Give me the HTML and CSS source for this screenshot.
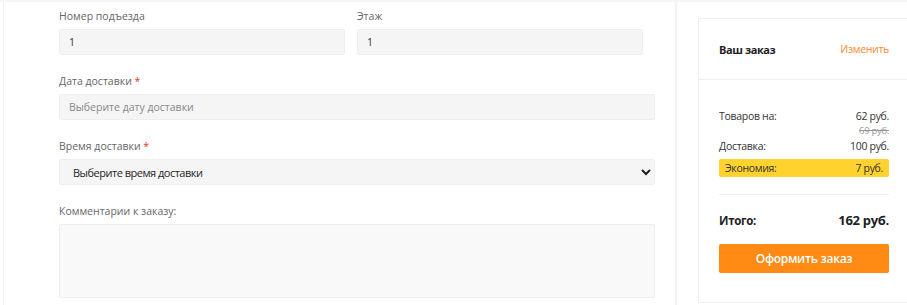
FILE: index.html
```html
<!DOCTYPE html>
<html lang="ru">

<head>
    <meta charset="UTF-8">
    <meta name="viewport" content="width=device-width, initial-scale=1.0">
    <link rel="stylesheet" href="styles.css">
</head>

<body>
    <div class="page">
        <div class="checkout-form">
            <div class="form-row">
                <div class="form-group">
                    <label for="entrance">Номер подъезда</label>
                    <input type="text" id="entrance" class="form-control" value="1">
                </div>
                <div class="form-group">
                    <label for="floor">Этаж</label>
                    <input type="text" id="floor" class="form-control" value="1">
                </div>
            </div>
            <div class="form-group">
                <label for="date">Дата доставки <span class="req">*</span></label>
                <input type="text" id="date" class="form-control" placeholder="Выберите дату доставки">
            </div>
            <div class="form-group">
                <label for="time">Время доставки <span class="req">*</span></label>
                <select id="time" class="form-control form-select">
                    <option value="">Выберите время доставки</option>
                </select>
            </div>
            <div class="form-group">
                <label for="comment">Комментарии к заказу:</label>
                <textarea id="comment" class="form-control form-textarea"></textarea>
            </div>
        </div>

        <div class="order-card">
            <div class="order-head">
                <span class="order-title">Ваш заказ</span>
                <a href="#" class="order-edit">Изменить</a>
            </div>
            <div class="order-body">
                <div class="order-line">
                    <span>Товаров на:</span>
                    <span>62 руб.</span>
                </div>
                <div class="order-old">69 руб.</div>
                <div class="order-line">
                    <span>Доставка:</span>
                    <span>100 руб.</span>
                </div>
                <div class="order-line order-save">
                    <span>Экономия:</span>
                    <span>7 руб.</span>
                </div>
                <div class="order-total">
                    <span>Итого:</span>
                    <span class="total-sum">162 руб.</span>
                </div>
                <button type="button" class="btn-order">Оформить заказ</button>
            </div>
        </div>
    </div>
</body>

</html>
```

FILE: styles.css
```css
/* checkout page */
* {
    box-sizing: border-box;
}

body {
    margin: 0;
    font-family: "Open Sans", "Noto Sans", sans-serif;
    color: #333;
    background: #fff;
    overflow: hidden;
    border-top: 2px solid #f6f6f6;
}

.page {
    display: flex;
    gap: 21px;
    padding-left: 3px;
    height: 303px;
}

.checkout-form {
    width: 674px;
    flex-shrink: 0;
    border-left: 1px solid #f0f0f0;
    border-right: 2px solid #f3f3f3;
    padding: 8px 20px 0 55px;
    margin-top: -2px;
}

.form-row {
    display: grid;
    grid-template-columns: 286px 286px;
    gap: 12px;
}

.form-group {
    margin-bottom: 18px;
}

label {
    display: block;
    font-size: 10.5px;
    color: #666;
    line-height: 16px;
    margin-bottom: 5px;
}

.req {
    color: #e0362c;
}

.form-control {
    display: block;
    width: 100%;
    height: 26px;
    border: 1px solid #eeeeee;
    border-radius: 2px;
    background: #f5f5f5;
    padding: 0 9px;
    font-family: inherit;
    font-size: 10.5px;
    color: #333;
    outline: 0;
}

.form-control::placeholder {
    color: #888;
}

.form-select {
    font-size: 11px;
    letter-spacing: -0.5px;
    color: #1f1f1f;
    padding-left: 9px;
}

.form-textarea {
    height: 74px;
    background: #f9f9f9;
    resize: none;
}

.order-card {
    width: 211px;
    flex-shrink: 0;
    margin-top: 16px;
    height: 285px;
    border: 1px solid #f0f0f0;
}

.order-head {
    display: flex;
    justify-content: space-between;
    align-items: center;
    height: 61px;
    padding: 0 19px 0 20px;
    border-bottom: 1px solid #f0f0f0;
}

.order-title {
    font-weight: bold;
    font-size: 11px;
    letter-spacing: -0.4px;
    color: #222;
}

.order-edit {
    font-size: 10.5px;
    letter-spacing: -0.3px;
    color: #f7892f;
    text-decoration: none;
}

.order-body {
    padding: 28px 19px 0 20px;
}

.order-line {
    display: flex;
    justify-content: space-between;
    font-size: 10.5px;
    letter-spacing: -0.3px;
    line-height: 16px;
    color: #333;
}

.order-old {
    text-align: right;
    font-size: 9.5px;
    letter-spacing: -0.3px;
    line-height: 14px;
    color: #999;
    text-decoration: line-through;
}

.order-save {
    margin-top: 5px;
    background: #ffd22e;
    border-radius: 2px;
    padding: 1px 6px;
    line-height: 16px;
}

.order-total {
    display: flex;
    justify-content: space-between;
    align-items: center;
    margin-top: 17px;
    border-top: 1px solid #f0f0f0;
    padding-top: 16px;
    font-weight: bold;
    font-size: 11.5px;
    letter-spacing: -0.3px;
    color: #222;
}

.total-sum {
    font-size: 13px;
}

.btn-order {
    display: block;
    width: 100%;
    height: 29px;
    margin-top: 15px;
    border: none;
    border-radius: 2px;
    background: #ff8a14;
    color: #fff;
    font-family: inherit;
    font-weight: 600;
    font-size: 12px;
    letter-spacing: -0.3px;
    cursor: pointer;
}
```
